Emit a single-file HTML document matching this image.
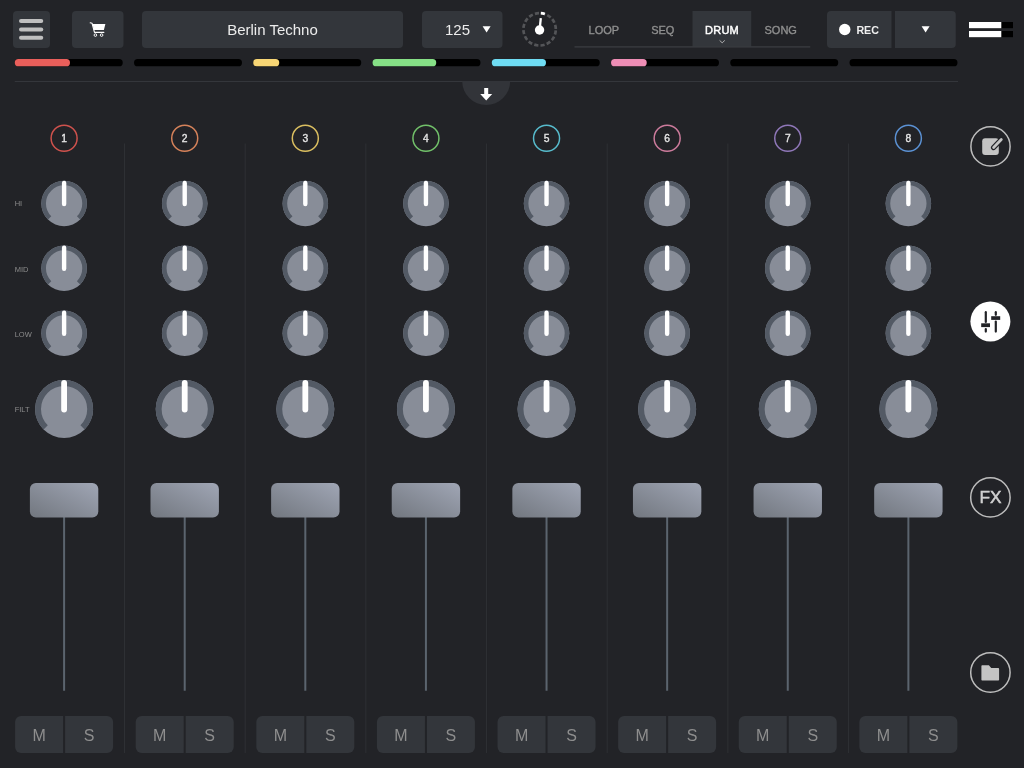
<!DOCTYPE html><html><head><meta charset="utf-8"><style>html,body{margin:0;padding:0;width:1024px;height:768px;overflow:hidden;background:#222327;position:relative}</style></head><body><svg width="1024" height="768" viewBox="0 0 1024 768" style="position:absolute;left:0;top:0;will-change:transform">
<rect width="1024" height="768" fill="#222327"/>
<rect x="13" y="11" width="37" height="37" rx="4" fill="#33363b"/>
<line x1="21" y1="21" x2="41.25" y2="21" stroke="#bfbfbf" stroke-width="4" stroke-linecap="round"/>
<line x1="21" y1="29.4" x2="41.25" y2="29.4" stroke="#bfbfbf" stroke-width="4" stroke-linecap="round"/>
<line x1="21" y1="37.75" x2="41.25" y2="37.75" stroke="#bfbfbf" stroke-width="4" stroke-linecap="round"/>
<rect x="72" y="11" width="51.5" height="37" rx="4" fill="#33363b"/>
<path d="M90.2,22.8 L92.1,23.3 L94.5,32.3 L103.9,32.3" fill="none" stroke="#ffffff" stroke-width="1.15" stroke-linejoin="round" stroke-linecap="round"/><path d="M92.6,24 L105.4,24 L103.9,29.9 L93.9,29.9 Z" fill="#ffffff"/><g fill="none" stroke="#ffffff" stroke-width="0.95"><circle cx="95.4" cy="35.1" r="1.3"/><circle cx="101.6" cy="35.1" r="1.3"/></g>
<rect x="142" y="11" width="261" height="37" rx="4" fill="#33363b"/>
<text x="272.5" y="35" font-family="Liberation Sans, sans-serif" font-size="15" fill="#ececec" text-anchor="middle">Berlin Techno</text>
<rect x="422" y="11" width="80.5" height="37" rx="4" fill="#33363b"/>
<text x="457.5" y="35" font-family="Liberation Sans, sans-serif" font-size="15" fill="#ececec" text-anchor="middle">125</text>
<path d="M482.6,26.3 L490.6,26.3 L486.6,32.4 Z" fill="#ffffff"/>
<circle cx="539.6" cy="29.35" r="16.2" fill="none" stroke="#545558" stroke-width="2.7" stroke-dasharray="4.162 2.200" stroke-dashoffset="-1.100"/>
<path d="M540.81,13.20 A16.20,16.20 0 0 1 544.79,14.01" fill="none" stroke="#ffffff" stroke-width="2.7"/>
<line x1="539.7" y1="29" x2="540.8" y2="18.2" stroke="#fff" stroke-width="2.3"/>
<circle cx="539.55" cy="30.0" r="4.7" fill="#fff"/>
<rect x="692.5" y="11" width="58.75" height="35.5" fill="#33363b"/>
<rect x="574.5" y="46.3" width="235.75" height="1.2" fill="#3d3f44"/>
<text x="603.9" y="33.8" font-family="Liberation Sans, sans-serif" font-size="11" fill="#8f8f8f" stroke="#8f8f8f" stroke-width="0.35" text-anchor="middle">LOOP</text>
<text x="662.8" y="33.8" font-family="Liberation Sans, sans-serif" font-size="11" fill="#8f8f8f" stroke="#8f8f8f" stroke-width="0.35" text-anchor="middle">SEQ</text>
<text x="722" y="33.8" font-family="Liberation Sans, sans-serif" font-size="11" fill="#ffffff" stroke="#ffffff" stroke-width="0.45" letter-spacing="0.3" text-anchor="middle">DRUM</text>
<text x="780.7" y="33.8" font-family="Liberation Sans, sans-serif" font-size="11" fill="#8f8f8f" stroke="#8f8f8f" stroke-width="0.35" text-anchor="middle">SONG</text>
<path d="M719.6,40.4 L722.2,42.8 L724.8,40.4" fill="none" stroke="#bbbbbb" stroke-width="0.9"/>
<path d="M831,11 H891.5 V48 H831 A4,4 0 0 1 827,44 V15 A4,4 0 0 1 831,11 Z" fill="#33363b"/>
<circle cx="844.75" cy="29.5" r="5.7" fill="#fff"/>
<text x="856.4" y="33.9" font-family="Liberation Sans, sans-serif" font-size="10.7" font-weight="bold" fill="#f0f0f0">REC</text>
<path d="M895,11 H951.75 A4,4 0 0 1 955.75,15 V44 A4,4 0 0 1 951.75,48 H895 Z" fill="#33363b"/>
<path d="M921.6,26.3 L929.6,26.3 L925.6,32.5 Z" fill="#ffffff"/>
<rect x="969" y="22" width="44" height="6.2" fill="#000"/><rect x="969" y="22" width="32.3" height="6.2" fill="#fff"/>
<rect x="969" y="31" width="44" height="6.2" fill="#000"/><rect x="969" y="31" width="32.3" height="6.2" fill="#fff"/>
<rect x="14.75" y="59" width="108" height="7.3" rx="3.65" fill="#000"/>
<rect x="14.75" y="59" width="55.25" height="7.3" rx="3.65" fill="#ea5f5b"/>
<rect x="134.00" y="59" width="108" height="7.3" rx="3.65" fill="#000"/>
<rect x="253.25" y="59" width="108" height="7.3" rx="3.65" fill="#000"/>
<rect x="253.25" y="59" width="26.00" height="7.3" rx="3.65" fill="#f8d675"/>
<rect x="372.50" y="59" width="108" height="7.3" rx="3.65" fill="#000"/>
<rect x="372.50" y="59" width="63.75" height="7.3" rx="3.65" fill="#86e086"/>
<rect x="491.75" y="59" width="108" height="7.3" rx="3.65" fill="#000"/>
<rect x="491.75" y="59" width="54.25" height="7.3" rx="3.65" fill="#6fdcf3"/>
<rect x="611.00" y="59" width="108" height="7.3" rx="3.65" fill="#000"/>
<rect x="611.00" y="59" width="35.75" height="7.3" rx="3.65" fill="#ee8db5"/>
<rect x="730.25" y="59" width="108" height="7.3" rx="3.65" fill="#000"/>
<rect x="849.50" y="59" width="108" height="7.3" rx="3.65" fill="#000"/>
<rect x="14.75" y="81" width="943.25" height="1" fill="#34363b"/>
<path d="M462.2,81 A24,24 0 0 0 510.2,81 Z" fill="#323439"/>
<path d="M484.2,88 H488.2 V94 H492.2 L486.2,100.4 L480.2,94 H484.2 Z" fill="#fff"/>
<rect x="124.00" y="143.5" width="1" height="609.5" fill="#2e3034"/>
<circle cx="64.10" cy="138.25" r="13" fill="none" stroke="#cf524d" stroke-width="1.5"/>
<text x="64.10" y="141.9" font-family="Liberation Sans, sans-serif" font-size="10.3" fill="#e6e6e6" stroke="#e6e6e6" stroke-width="0.35" text-anchor="middle">1</text>
<circle cx="64.10" cy="203.50" r="22.75" fill="#888d98"/>
<path d="M49.64,217.96 A20.45,20.45 0 1 1 78.56,217.96" fill="none" stroke="#535a65" stroke-width="4.60"/>
<line x1="64.10" y1="182.95" x2="64.10" y2="203.94" stroke="#ffffff" stroke-width="4.40" stroke-linecap="round"/>
<circle cx="64.10" cy="268.30" r="22.75" fill="#888d98"/>
<path d="M49.64,282.76 A20.45,20.45 0 1 1 78.56,282.76" fill="none" stroke="#535a65" stroke-width="4.60"/>
<line x1="64.10" y1="247.75" x2="64.10" y2="268.74" stroke="#ffffff" stroke-width="4.40" stroke-linecap="round"/>
<circle cx="64.10" cy="333.30" r="22.75" fill="#888d98"/>
<path d="M49.64,347.76 A20.45,20.45 0 1 1 78.56,347.76" fill="none" stroke="#535a65" stroke-width="4.60"/>
<line x1="64.10" y1="312.75" x2="64.10" y2="333.74" stroke="#ffffff" stroke-width="4.40" stroke-linecap="round"/>
<circle cx="64.10" cy="409.00" r="29.00" fill="#888d98"/>
<path d="M45.68,427.42 A26.05,26.05 0 1 1 82.52,427.42" fill="none" stroke="#535a65" stroke-width="5.90"/>
<line x1="64.10" y1="382.90" x2="64.10" y2="409.58" stroke="#ffffff" stroke-width="5.80" stroke-linecap="round"/>
<rect x="63.10" y="517" width="2" height="173.75" fill="#5b646e"/>
<rect x="29.90" y="483" width="68.4" height="34.5" rx="6" fill="url(#fg)"/>
<path d="M21.10,716 H63.10 V753 H21.10 A6,6 0 0 1 15.10,747 V722 A6,6 0 0 1 21.10,716 Z" fill="#33363b"/>
<path d="M65.10,716 H107.10 A6,6 0 0 1 113.10,722 V747 A6,6 0 0 1 107.10,753 H65.10 Z" fill="#33363b"/>
<text x="39.10" y="740.5" font-family="Liberation Sans, sans-serif" font-size="16" fill="#8e8e8e" text-anchor="middle">M</text>
<text x="89.10" y="740.5" font-family="Liberation Sans, sans-serif" font-size="16" fill="#8e8e8e" text-anchor="middle">S</text>
<rect x="244.67" y="143.5" width="1" height="609.5" fill="#2e3034"/>
<circle cx="184.71" cy="138.25" r="13" fill="none" stroke="#d5825a" stroke-width="1.5"/>
<text x="184.71" y="141.9" font-family="Liberation Sans, sans-serif" font-size="10.3" fill="#e6e6e6" stroke="#e6e6e6" stroke-width="0.35" text-anchor="middle">2</text>
<circle cx="184.71" cy="203.50" r="22.75" fill="#888d98"/>
<path d="M170.25,217.96 A20.45,20.45 0 1 1 199.17,217.96" fill="none" stroke="#535a65" stroke-width="4.60"/>
<line x1="184.71" y1="182.95" x2="184.71" y2="203.94" stroke="#ffffff" stroke-width="4.40" stroke-linecap="round"/>
<circle cx="184.71" cy="268.30" r="22.75" fill="#888d98"/>
<path d="M170.25,282.76 A20.45,20.45 0 1 1 199.17,282.76" fill="none" stroke="#535a65" stroke-width="4.60"/>
<line x1="184.71" y1="247.75" x2="184.71" y2="268.74" stroke="#ffffff" stroke-width="4.40" stroke-linecap="round"/>
<circle cx="184.71" cy="333.30" r="22.75" fill="#888d98"/>
<path d="M170.25,347.76 A20.45,20.45 0 1 1 199.17,347.76" fill="none" stroke="#535a65" stroke-width="4.60"/>
<line x1="184.71" y1="312.75" x2="184.71" y2="333.74" stroke="#ffffff" stroke-width="4.40" stroke-linecap="round"/>
<circle cx="184.71" cy="409.00" r="29.00" fill="#888d98"/>
<path d="M166.29,427.42 A26.05,26.05 0 1 1 203.13,427.42" fill="none" stroke="#535a65" stroke-width="5.90"/>
<line x1="184.71" y1="382.90" x2="184.71" y2="409.58" stroke="#ffffff" stroke-width="5.80" stroke-linecap="round"/>
<rect x="183.71" y="517" width="2" height="173.75" fill="#5b646e"/>
<rect x="150.51" y="483" width="68.4" height="34.5" rx="6" fill="url(#fg)"/>
<path d="M141.71,716 H183.71 V753 H141.71 A6,6 0 0 1 135.71,747 V722 A6,6 0 0 1 141.71,716 Z" fill="#33363b"/>
<path d="M185.71,716 H227.71 A6,6 0 0 1 233.71,722 V747 A6,6 0 0 1 227.71,753 H185.71 Z" fill="#33363b"/>
<text x="159.71" y="740.5" font-family="Liberation Sans, sans-serif" font-size="16" fill="#8e8e8e" text-anchor="middle">M</text>
<text x="209.71" y="740.5" font-family="Liberation Sans, sans-serif" font-size="16" fill="#8e8e8e" text-anchor="middle">S</text>
<rect x="365.34" y="143.5" width="1" height="609.5" fill="#2e3034"/>
<circle cx="305.32" cy="138.25" r="13" fill="none" stroke="#dabe60" stroke-width="1.5"/>
<text x="305.32" y="141.9" font-family="Liberation Sans, sans-serif" font-size="10.3" fill="#e6e6e6" stroke="#e6e6e6" stroke-width="0.35" text-anchor="middle">3</text>
<circle cx="305.32" cy="203.50" r="22.75" fill="#888d98"/>
<path d="M290.86,217.96 A20.45,20.45 0 1 1 319.78,217.96" fill="none" stroke="#535a65" stroke-width="4.60"/>
<line x1="305.32" y1="182.95" x2="305.32" y2="203.94" stroke="#ffffff" stroke-width="4.40" stroke-linecap="round"/>
<circle cx="305.32" cy="268.30" r="22.75" fill="#888d98"/>
<path d="M290.86,282.76 A20.45,20.45 0 1 1 319.78,282.76" fill="none" stroke="#535a65" stroke-width="4.60"/>
<line x1="305.32" y1="247.75" x2="305.32" y2="268.74" stroke="#ffffff" stroke-width="4.40" stroke-linecap="round"/>
<circle cx="305.32" cy="333.30" r="22.75" fill="#888d98"/>
<path d="M290.86,347.76 A20.45,20.45 0 1 1 319.78,347.76" fill="none" stroke="#535a65" stroke-width="4.60"/>
<line x1="305.32" y1="312.75" x2="305.32" y2="333.74" stroke="#ffffff" stroke-width="4.40" stroke-linecap="round"/>
<circle cx="305.32" cy="409.00" r="29.00" fill="#888d98"/>
<path d="M286.90,427.42 A26.05,26.05 0 1 1 323.74,427.42" fill="none" stroke="#535a65" stroke-width="5.90"/>
<line x1="305.32" y1="382.90" x2="305.32" y2="409.58" stroke="#ffffff" stroke-width="5.80" stroke-linecap="round"/>
<rect x="304.32" y="517" width="2" height="173.75" fill="#5b646e"/>
<rect x="271.12" y="483" width="68.4" height="34.5" rx="6" fill="url(#fg)"/>
<path d="M262.32,716 H304.32 V753 H262.32 A6,6 0 0 1 256.32,747 V722 A6,6 0 0 1 262.32,716 Z" fill="#33363b"/>
<path d="M306.32,716 H348.32 A6,6 0 0 1 354.32,722 V747 A6,6 0 0 1 348.32,753 H306.32 Z" fill="#33363b"/>
<text x="280.32" y="740.5" font-family="Liberation Sans, sans-serif" font-size="16" fill="#8e8e8e" text-anchor="middle">M</text>
<text x="330.32" y="740.5" font-family="Liberation Sans, sans-serif" font-size="16" fill="#8e8e8e" text-anchor="middle">S</text>
<rect x="486.01" y="143.5" width="1" height="609.5" fill="#2e3034"/>
<circle cx="425.93" cy="138.25" r="13" fill="none" stroke="#72c16a" stroke-width="1.5"/>
<text x="425.93" y="141.9" font-family="Liberation Sans, sans-serif" font-size="10.3" fill="#e6e6e6" stroke="#e6e6e6" stroke-width="0.35" text-anchor="middle">4</text>
<circle cx="425.93" cy="203.50" r="22.75" fill="#888d98"/>
<path d="M411.47,217.96 A20.45,20.45 0 1 1 440.39,217.96" fill="none" stroke="#535a65" stroke-width="4.60"/>
<line x1="425.93" y1="182.95" x2="425.93" y2="203.94" stroke="#ffffff" stroke-width="4.40" stroke-linecap="round"/>
<circle cx="425.93" cy="268.30" r="22.75" fill="#888d98"/>
<path d="M411.47,282.76 A20.45,20.45 0 1 1 440.39,282.76" fill="none" stroke="#535a65" stroke-width="4.60"/>
<line x1="425.93" y1="247.75" x2="425.93" y2="268.74" stroke="#ffffff" stroke-width="4.40" stroke-linecap="round"/>
<circle cx="425.93" cy="333.30" r="22.75" fill="#888d98"/>
<path d="M411.47,347.76 A20.45,20.45 0 1 1 440.39,347.76" fill="none" stroke="#535a65" stroke-width="4.60"/>
<line x1="425.93" y1="312.75" x2="425.93" y2="333.74" stroke="#ffffff" stroke-width="4.40" stroke-linecap="round"/>
<circle cx="425.93" cy="409.00" r="29.00" fill="#888d98"/>
<path d="M407.51,427.42 A26.05,26.05 0 1 1 444.35,427.42" fill="none" stroke="#535a65" stroke-width="5.90"/>
<line x1="425.93" y1="382.90" x2="425.93" y2="409.58" stroke="#ffffff" stroke-width="5.80" stroke-linecap="round"/>
<rect x="424.93" y="517" width="2" height="173.75" fill="#5b646e"/>
<rect x="391.73" y="483" width="68.4" height="34.5" rx="6" fill="url(#fg)"/>
<path d="M382.93,716 H424.93 V753 H382.93 A6,6 0 0 1 376.93,747 V722 A6,6 0 0 1 382.93,716 Z" fill="#33363b"/>
<path d="M426.93,716 H468.93 A6,6 0 0 1 474.93,722 V747 A6,6 0 0 1 468.93,753 H426.93 Z" fill="#33363b"/>
<text x="400.93" y="740.5" font-family="Liberation Sans, sans-serif" font-size="16" fill="#8e8e8e" text-anchor="middle">M</text>
<text x="450.93" y="740.5" font-family="Liberation Sans, sans-serif" font-size="16" fill="#8e8e8e" text-anchor="middle">S</text>
<rect x="606.68" y="143.5" width="1" height="609.5" fill="#2e3034"/>
<circle cx="546.54" cy="138.25" r="13" fill="none" stroke="#57bbcc" stroke-width="1.5"/>
<text x="546.54" y="141.9" font-family="Liberation Sans, sans-serif" font-size="10.3" fill="#e6e6e6" stroke="#e6e6e6" stroke-width="0.35" text-anchor="middle">5</text>
<circle cx="546.54" cy="203.50" r="22.75" fill="#888d98"/>
<path d="M532.08,217.96 A20.45,20.45 0 1 1 561.00,217.96" fill="none" stroke="#535a65" stroke-width="4.60"/>
<line x1="546.54" y1="182.95" x2="546.54" y2="203.94" stroke="#ffffff" stroke-width="4.40" stroke-linecap="round"/>
<circle cx="546.54" cy="268.30" r="22.75" fill="#888d98"/>
<path d="M532.08,282.76 A20.45,20.45 0 1 1 561.00,282.76" fill="none" stroke="#535a65" stroke-width="4.60"/>
<line x1="546.54" y1="247.75" x2="546.54" y2="268.74" stroke="#ffffff" stroke-width="4.40" stroke-linecap="round"/>
<circle cx="546.54" cy="333.30" r="22.75" fill="#888d98"/>
<path d="M532.08,347.76 A20.45,20.45 0 1 1 561.00,347.76" fill="none" stroke="#535a65" stroke-width="4.60"/>
<line x1="546.54" y1="312.75" x2="546.54" y2="333.74" stroke="#ffffff" stroke-width="4.40" stroke-linecap="round"/>
<circle cx="546.54" cy="409.00" r="29.00" fill="#888d98"/>
<path d="M528.12,427.42 A26.05,26.05 0 1 1 564.96,427.42" fill="none" stroke="#535a65" stroke-width="5.90"/>
<line x1="546.54" y1="382.90" x2="546.54" y2="409.58" stroke="#ffffff" stroke-width="5.80" stroke-linecap="round"/>
<rect x="545.54" y="517" width="2" height="173.75" fill="#5b646e"/>
<rect x="512.34" y="483" width="68.4" height="34.5" rx="6" fill="url(#fg)"/>
<path d="M503.54,716 H545.54 V753 H503.54 A6,6 0 0 1 497.54,747 V722 A6,6 0 0 1 503.54,716 Z" fill="#33363b"/>
<path d="M547.54,716 H589.54 A6,6 0 0 1 595.54,722 V747 A6,6 0 0 1 589.54,753 H547.54 Z" fill="#33363b"/>
<text x="521.54" y="740.5" font-family="Liberation Sans, sans-serif" font-size="16" fill="#8e8e8e" text-anchor="middle">M</text>
<text x="571.54" y="740.5" font-family="Liberation Sans, sans-serif" font-size="16" fill="#8e8e8e" text-anchor="middle">S</text>
<rect x="727.35" y="143.5" width="1" height="609.5" fill="#2e3034"/>
<circle cx="667.15" cy="138.25" r="13" fill="none" stroke="#cc7b9c" stroke-width="1.5"/>
<text x="667.15" y="141.9" font-family="Liberation Sans, sans-serif" font-size="10.3" fill="#e6e6e6" stroke="#e6e6e6" stroke-width="0.35" text-anchor="middle">6</text>
<circle cx="667.15" cy="203.50" r="22.75" fill="#888d98"/>
<path d="M652.69,217.96 A20.45,20.45 0 1 1 681.61,217.96" fill="none" stroke="#535a65" stroke-width="4.60"/>
<line x1="667.15" y1="182.95" x2="667.15" y2="203.94" stroke="#ffffff" stroke-width="4.40" stroke-linecap="round"/>
<circle cx="667.15" cy="268.30" r="22.75" fill="#888d98"/>
<path d="M652.69,282.76 A20.45,20.45 0 1 1 681.61,282.76" fill="none" stroke="#535a65" stroke-width="4.60"/>
<line x1="667.15" y1="247.75" x2="667.15" y2="268.74" stroke="#ffffff" stroke-width="4.40" stroke-linecap="round"/>
<circle cx="667.15" cy="333.30" r="22.75" fill="#888d98"/>
<path d="M652.69,347.76 A20.45,20.45 0 1 1 681.61,347.76" fill="none" stroke="#535a65" stroke-width="4.60"/>
<line x1="667.15" y1="312.75" x2="667.15" y2="333.74" stroke="#ffffff" stroke-width="4.40" stroke-linecap="round"/>
<circle cx="667.15" cy="409.00" r="29.00" fill="#888d98"/>
<path d="M648.73,427.42 A26.05,26.05 0 1 1 685.57,427.42" fill="none" stroke="#535a65" stroke-width="5.90"/>
<line x1="667.15" y1="382.90" x2="667.15" y2="409.58" stroke="#ffffff" stroke-width="5.80" stroke-linecap="round"/>
<rect x="666.15" y="517" width="2" height="173.75" fill="#5b646e"/>
<rect x="632.95" y="483" width="68.4" height="34.5" rx="6" fill="url(#fg)"/>
<path d="M624.15,716 H666.15 V753 H624.15 A6,6 0 0 1 618.15,747 V722 A6,6 0 0 1 624.15,716 Z" fill="#33363b"/>
<path d="M668.15,716 H710.15 A6,6 0 0 1 716.15,722 V747 A6,6 0 0 1 710.15,753 H668.15 Z" fill="#33363b"/>
<text x="642.15" y="740.5" font-family="Liberation Sans, sans-serif" font-size="16" fill="#8e8e8e" text-anchor="middle">M</text>
<text x="692.15" y="740.5" font-family="Liberation Sans, sans-serif" font-size="16" fill="#8e8e8e" text-anchor="middle">S</text>
<rect x="848.02" y="143.5" width="1" height="609.5" fill="#2e3034"/>
<circle cx="787.76" cy="138.25" r="13" fill="none" stroke="#8f77b8" stroke-width="1.5"/>
<text x="787.76" y="141.9" font-family="Liberation Sans, sans-serif" font-size="10.3" fill="#e6e6e6" stroke="#e6e6e6" stroke-width="0.35" text-anchor="middle">7</text>
<circle cx="787.76" cy="203.50" r="22.75" fill="#888d98"/>
<path d="M773.30,217.96 A20.45,20.45 0 1 1 802.22,217.96" fill="none" stroke="#535a65" stroke-width="4.60"/>
<line x1="787.76" y1="182.95" x2="787.76" y2="203.94" stroke="#ffffff" stroke-width="4.40" stroke-linecap="round"/>
<circle cx="787.76" cy="268.30" r="22.75" fill="#888d98"/>
<path d="M773.30,282.76 A20.45,20.45 0 1 1 802.22,282.76" fill="none" stroke="#535a65" stroke-width="4.60"/>
<line x1="787.76" y1="247.75" x2="787.76" y2="268.74" stroke="#ffffff" stroke-width="4.40" stroke-linecap="round"/>
<circle cx="787.76" cy="333.30" r="22.75" fill="#888d98"/>
<path d="M773.30,347.76 A20.45,20.45 0 1 1 802.22,347.76" fill="none" stroke="#535a65" stroke-width="4.60"/>
<line x1="787.76" y1="312.75" x2="787.76" y2="333.74" stroke="#ffffff" stroke-width="4.40" stroke-linecap="round"/>
<circle cx="787.76" cy="409.00" r="29.00" fill="#888d98"/>
<path d="M769.34,427.42 A26.05,26.05 0 1 1 806.18,427.42" fill="none" stroke="#535a65" stroke-width="5.90"/>
<line x1="787.76" y1="382.90" x2="787.76" y2="409.58" stroke="#ffffff" stroke-width="5.80" stroke-linecap="round"/>
<rect x="786.76" y="517" width="2" height="173.75" fill="#5b646e"/>
<rect x="753.56" y="483" width="68.4" height="34.5" rx="6" fill="url(#fg)"/>
<path d="M744.76,716 H786.76 V753 H744.76 A6,6 0 0 1 738.76,747 V722 A6,6 0 0 1 744.76,716 Z" fill="#33363b"/>
<path d="M788.76,716 H830.76 A6,6 0 0 1 836.76,722 V747 A6,6 0 0 1 830.76,753 H788.76 Z" fill="#33363b"/>
<text x="762.76" y="740.5" font-family="Liberation Sans, sans-serif" font-size="16" fill="#8e8e8e" text-anchor="middle">M</text>
<text x="812.76" y="740.5" font-family="Liberation Sans, sans-serif" font-size="16" fill="#8e8e8e" text-anchor="middle">S</text>
<circle cx="908.37" cy="138.25" r="13" fill="none" stroke="#5b91d3" stroke-width="1.5"/>
<text x="908.37" y="141.9" font-family="Liberation Sans, sans-serif" font-size="10.3" fill="#e6e6e6" stroke="#e6e6e6" stroke-width="0.35" text-anchor="middle">8</text>
<circle cx="908.37" cy="203.50" r="22.75" fill="#888d98"/>
<path d="M893.91,217.96 A20.45,20.45 0 1 1 922.83,217.96" fill="none" stroke="#535a65" stroke-width="4.60"/>
<line x1="908.37" y1="182.95" x2="908.37" y2="203.94" stroke="#ffffff" stroke-width="4.40" stroke-linecap="round"/>
<circle cx="908.37" cy="268.30" r="22.75" fill="#888d98"/>
<path d="M893.91,282.76 A20.45,20.45 0 1 1 922.83,282.76" fill="none" stroke="#535a65" stroke-width="4.60"/>
<line x1="908.37" y1="247.75" x2="908.37" y2="268.74" stroke="#ffffff" stroke-width="4.40" stroke-linecap="round"/>
<circle cx="908.37" cy="333.30" r="22.75" fill="#888d98"/>
<path d="M893.91,347.76 A20.45,20.45 0 1 1 922.83,347.76" fill="none" stroke="#535a65" stroke-width="4.60"/>
<line x1="908.37" y1="312.75" x2="908.37" y2="333.74" stroke="#ffffff" stroke-width="4.40" stroke-linecap="round"/>
<circle cx="908.37" cy="409.00" r="29.00" fill="#888d98"/>
<path d="M889.95,427.42 A26.05,26.05 0 1 1 926.79,427.42" fill="none" stroke="#535a65" stroke-width="5.90"/>
<line x1="908.37" y1="382.90" x2="908.37" y2="409.58" stroke="#ffffff" stroke-width="5.80" stroke-linecap="round"/>
<rect x="907.37" y="517" width="2" height="173.75" fill="#5b646e"/>
<rect x="874.17" y="483" width="68.4" height="34.5" rx="6" fill="url(#fg)"/>
<path d="M865.37,716 H907.37 V753 H865.37 A6,6 0 0 1 859.37,747 V722 A6,6 0 0 1 865.37,716 Z" fill="#33363b"/>
<path d="M909.37,716 H951.37 A6,6 0 0 1 957.37,722 V747 A6,6 0 0 1 951.37,753 H909.37 Z" fill="#33363b"/>
<text x="883.37" y="740.5" font-family="Liberation Sans, sans-serif" font-size="16" fill="#8e8e8e" text-anchor="middle">M</text>
<text x="933.37" y="740.5" font-family="Liberation Sans, sans-serif" font-size="16" fill="#8e8e8e" text-anchor="middle">S</text>
<defs><linearGradient id="fg" x1="0" y1="1" x2="1" y2="0"><stop offset="0" stop-color="#72777f"/><stop offset="1" stop-color="#a0a6b5"/></linearGradient></defs>
<text x="14.7" y="206.4" font-family="Liberation Sans, sans-serif" font-size="7.5" fill="#8c8c8c">HI</text>
<text x="14.7" y="271.5" font-family="Liberation Sans, sans-serif" font-size="7.5" fill="#8c8c8c">MID</text>
<text x="14.7" y="336.5" font-family="Liberation Sans, sans-serif" font-size="7.5" fill="#8c8c8c">LOW</text>
<text x="14.7" y="412.2" font-family="Liberation Sans, sans-serif" font-size="7.5" fill="#8c8c8c">FILT</text>
<circle cx="990.5" cy="146.4" r="19.6" fill="none" stroke="#bdbdbd" stroke-width="1.5"/>
<rect x="982.2" y="138.3" width="16.6" height="16.6" rx="3" fill="#c4c4c4"/>
<line x1="993.6" y1="147.5" x2="1001.3" y2="139.6" stroke="#222327" stroke-width="5.3" stroke-linecap="round"/>
<line x1="993.6" y1="147.5" x2="1001.3" y2="139.6" stroke="#c4c4c4" stroke-width="2.8" stroke-linecap="round"/>
<circle cx="990.4" cy="321.4" r="20" fill="#fff"/>
<g stroke="#222327" stroke-width="2.2" stroke-linecap="round"><line x1="985.8" y1="312.2" x2="985.8" y2="322"/><line x1="985.8" y1="329" x2="985.8" y2="331.6"/><line x1="995.8" y1="312.2" x2="995.8" y2="314.8"/><line x1="995.8" y1="321.6" x2="995.8" y2="331.6"/></g><rect x="981.2" y="323.3" width="8.8" height="3.8" fill="#222327"/><rect x="991.2" y="316.2" width="9" height="3.7" fill="#222327"/>
<circle cx="990.4" cy="497.4" r="19.7" fill="none" stroke="#bdbdbd" stroke-width="1.5"/>
<text x="990.6" y="503.1" font-family="Liberation Sans, sans-serif" font-size="17.3" fill="#d0d0d0" stroke="#d0d0d0" stroke-width="0.5" text-anchor="middle">FX</text>
<circle cx="990.4" cy="672.5" r="19.7" fill="none" stroke="#bdbdbd" stroke-width="1.5"/>
<path d="M982.2,665.2 H988.9 L991.2,668.1 H998.3 A0.8,0.8 0 0 1 999.1,668.9 V679.8 A0.8,0.8 0 0 1 998.3,680.6 H982.2 A0.8,0.8 0 0 1 981.4,679.8 V666 A0.8,0.8 0 0 1 982.2,665.2 Z" fill="#c4c4c4"/>
</svg></body></html>
